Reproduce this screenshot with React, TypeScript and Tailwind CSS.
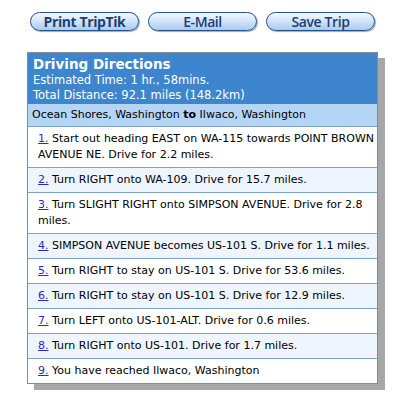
import React from 'react';

const steps = [
  'Start out heading EAST on WA-115 towards POINT BROWN AVENUE NE. Drive for 2.2 miles.',
  'Turn RIGHT onto WA-109. Drive for 15.7 miles.',
  'Turn SLIGHT RIGHT onto SIMPSON AVENUE. Drive for 2.8 miles.',
  'SIMPSON AVENUE becomes US-101 S. Drive for 1.1 miles.',
  'Turn RIGHT to stay on US-101 S. Drive for 53.6 miles.',
  'Turn RIGHT to stay on US-101 S. Drive for 12.9 miles.',
  'Turn LEFT onto US-101-ALT. Drive for 0.6 miles.',
  'Turn RIGHT onto US-101. Drive for 1.7 miles.',
  'You have reached Ilwaco, Washington',
];

const PillButton = ({ label, bold }: { label: string; bold?: boolean }) => (
  <button
    className={
      bold
        ? "flex h-[19px] w-[109px] items-center justify-center rounded-full border border-[#24528a] bg-gradient-to-b from-[#f4f9ff] via-[#cfe3fa] to-[#a9cbf0] font-['Open_Sans',sans-serif] text-[14px] leading-none font-bold tracking-[-0.4px] text-[#1c3f73] shadow-[1px_1px_1px_#9ab]"
        : "flex h-[19px] w-[109px] items-center justify-center rounded-full border border-[#24528a] bg-gradient-to-b from-[#f4f9ff] via-[#cfe3fa] to-[#a9cbf0] font-['Open_Sans',sans-serif] text-[14px] leading-none font-semibold tracking-[-0.4px] text-[#1c3f73] shadow-[1px_1px_1px_#9ab]"
    }
  >
    {label}
  </button>
);

const App = () => {
  return (
    <div className="h-[396px] w-[393px] bg-white font-['DejaVu_Sans',Verdana,sans-serif]">
      <div className="flex gap-[9px] pt-[12px] pl-[30px]">
        <PillButton label="Print TripTik" bold />
        <PillButton label="E-Mail" />
        <PillButton label="Save Trip" />
      </div>

      <div className="mt-[21px] ml-[27px] w-[351px] border border-[#7f8c99] bg-white shadow-[7px_6px_0_#a7a7a7]">
        <div className="bg-[#3d85cd] px-[5px] pt-[3px] pb-[1px] text-white">
          <div className="text-[13.5px] leading-[17px] font-bold">Driving Directions</div>
          <div className="text-[11.5px] leading-[15px]">Estimated Time: 1 hr., 58mins.</div>
          <div className="text-[11.5px] leading-[15px]">Total Distance: 92.1 miles (148.2km)</div>
        </div>
        <div className="border-b border-[#7fa3c6] bg-[#b5d5f7] px-[4px] pt-[4px] pb-[4px] text-[11px] leading-[14px] text-black">
          Ocean Shores, Washington <span className="font-bold">to</span> Ilwaco, Washington
        </div>
        {steps.map((step, i) => (
          <div
            key={i}
            className={
              i % 2 === 0
                ? 'border-b border-[#7fa3c6] bg-white py-[4px] pr-0 pl-[10px] text-[11px] leading-[16px] text-black last:border-b-0'
                : 'border-b border-[#7fa3c6] bg-[#eef5fe] py-[4px] pr-0 pl-[10px] text-[11px] leading-[16px] text-black last:border-b-0'
            }
          >
            <a href="#" className="text-[#2b2bc4] underline">
              {i + 1}.
            </a>{' '}
            {step}
          </div>
        ))}
      </div>
    </div>
  );
};

export default App;
